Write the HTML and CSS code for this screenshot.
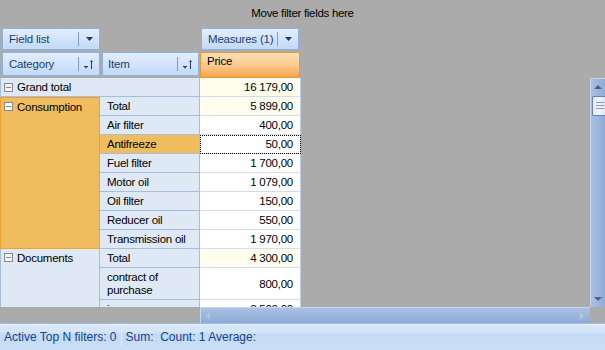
FILE: index.html
```html
<!DOCTYPE html>
<html lang="en">

<head>
    <meta charset="UTF-8">
    <title>Pivot grid</title>
    <link rel="stylesheet" href="styles.css">
</head>

<body>
    <div class="app">
        <!-- filter area -->
        <div class="filter-area">Move filter fields here</div>

        <!-- field list / measures -->
        <div class="field-row">
            <div class="field-btn">
                <span class="field-name">Field list</span>
                <span class="field-tool"><svg width="7" height="4"><path d="M0 0h7L3.5 4z" fill="#1b3c78"/></svg></span>
            </div>
            <div class="field-btn measures">
                <span class="field-name">Measures (1)</span>
                <span class="field-tool"><svg width="7" height="4"><path d="M0 0h7L3.5 4z" fill="#1b3c78"/></svg></span>
            </div>
        </div>

        <!-- row fields and data header -->
        <div class="header-row">
            <div class="field-btn tall">
                <span class="field-name">Category</span>
                <span class="field-tool"><svg class="sort" width="10" height="10"><path d="M0 6h4v1H0z M1 7h2L2 9z M6 2L7.5 0 9 2z M7 2h1v7H7z" fill="#1b3c78"/></svg></span>
            </div>
            <div class="field-btn tall item-btn">
                <span class="field-name">Item</span>
                <span class="field-tool"><svg class="sort" width="10" height="10"><path d="M0 6h4v1H0z M1 7h2L2 9z M6 2L7.5 0 9 2z M7 2h1v7H7z" fill="#1b3c78"/></svg></span>
            </div>
            <div class="data-head">Price</div>
        </div>

        <!-- grid body -->
        <div class="body-row">
            <div class="cells-wrap">
                <div class="cells">
                    <div class="rh grand"><span class="toggle"></span>Grand total</div>
                    <div class="val total">16 179,00</div>

                    <div class="rh cat hot" style="grid-row: span 8"><span class="toggle"></span>Consumption</div>
                    <div class="rh">Total</div><div class="val total">5 899,00</div>
                    <div class="rh">Air filter</div><div class="val">400,00</div>
                    <div class="rh hot-item">Antifreeze</div><div class="val focus">50,00</div>
                    <div class="rh">Fuel filter</div><div class="val">1 700,00</div>
                    <div class="rh">Motor oil</div><div class="val">1 079,00</div>
                    <div class="rh">Oil filter</div><div class="val">150,00</div>
                    <div class="rh">Reducer oil</div><div class="val">550,00</div>
                    <div class="rh">Transmission oil</div><div class="val">1 970,00</div>

                    <div class="rh cat" style="grid-row: span 3"><span class="toggle"></span>Documents</div>
                    <div class="rh">Total</div><div class="val total">4 300,00</div>
                    <div class="rh">contract of<br>purchase</div><div class="val">800,00</div>
                    <div class="rh">insurance</div><div class="val">3 500,00</div>
                </div>
            </div>
            <div class="vscroll">
                <span class="arrow-up"></span>
                <span class="thumb"></span>
                <span class="arrow-down"></span>
            </div>
        </div>

        <div class="hscroll-row">
            <div class="hscroll-gap"></div>
            <div class="hscroll">
                <span class="arrow-left"></span>
                <span class="arrow-right"></span>
            </div>
            <div class="corner"></div>
        </div>

        <!-- status bar -->
        <div class="status">
            <span class="status-item">Active Top N filters: 0</span>
            <span class="status-item">Sum:&nbsp; Count: 1 Average:</span>
        </div>
    </div>
</body>

</html>
```

FILE: styles.css
```css
/* page */
body {
    margin: 0;
    background-color: #ababab;
    font-family: "Liberation Sans", Arial, sans-serif;
    font-size: 11px;
    color: #000;
}

.app {
    width: 605px;
    height: 350px;
    display: flex;
    flex-direction: column;
    overflow: hidden;
}

/* filter area */
.filter-area {
    height: 28px;
    line-height: 14px;
    padding-top: 6px;
    box-sizing: border-box;
    text-align: center;
    font-size: 11.5px;
    letter-spacing: -0.3px;
}

/* field buttons */
.field-row {
    height: 24px;
    display: flex;
    align-items: flex-start;
    padding-left: 2px;
}

.field-btn {
    width: 98px;
    height: 22px;
    box-sizing: border-box;
    border: 1px solid #8db2e3;
    background: linear-gradient(#e3eefd, #d3e4fb 50%, #c3d9f7);
    color: #1b3c78;
    display: flex;
    align-items: center;
    letter-spacing: -0.2px;
    font-size: 11.5px;
}

.field-btn.measures {
    margin-left: 101px;
}

.field-name {
    flex: 1;
    padding-left: 6px;
    white-space: nowrap;
}

.field-tool {
    width: 20px;
    height: 14px;
    border-left: 1px solid #7b9fcf;
    display: flex;
    align-items: center;
    justify-content: center;
}

.field-tool .sort {
    margin-top: 2px;
}

.header-row {
    height: 26px;
    display: flex;
    align-items: flex-start;
    padding-left: 2px;
}

.field-btn.tall {
    height: 24px;
}

.field-btn.item-btn {
    width: 97px;
    margin-left: 2px;
}

.field-btn.item-btn .field-name {
    padding-left: 5px;
}

.data-head {
    width: 100px;
    height: 26px;
    margin-left: 1px;
    box-sizing: border-box;
    border: 1px solid #f0962e;
    background: linear-gradient(#fde0b5, #fbc98a 55%, #f7a24c);
    padding: 2px 0 0 6px;
    font-size: 11.5px;
    letter-spacing: -0.2px;
}

/* grid body */
.body-row {
    height: 229px;
    display: flex;
}

.cells-wrap {
    flex: 1;
    overflow: hidden;
}

.cells {
    width: 301px;
    display: grid;
    grid-template-columns: 100px 100px 101px;
    grid-auto-rows: 19px;
    grid-template-rows: repeat(10, 19px) 32px 19px;
    letter-spacing: -0.25px;
    font-size: 11.5px;
}

.rh {
    background-color: #dfe8f5;
    border-right: 1px solid #a8bdd9;
    border-bottom: 1px solid #a8bdd9;
    display: flex;
    align-items: center;
    padding-left: 7px;
    line-height: 13px;
}

.rh.grand {
    grid-column: span 2;
    border-left: 1px solid #a8bdd9;
    padding-left: 3px;
}

.rh.cat {
    border-left: 1px solid #a8bdd9;
    align-items: flex-start;
    padding: 3px 0 0 3px;
}

.rh.hot {
    background-color: #f0bd5e;
    border: 1px solid #f0a035;
}

.rh.hot-item {
    background-color: #f0bd5e;
    border-left: 1px solid #f0a035;
    margin-left: -1px;
    padding-left: 7px;
}

.toggle {
    width: 7px;
    height: 7px;
    margin: 1px 4px 0 0;
    border: 1px solid #8a8a8a;
    background: #f4f4f4 linear-gradient(#8a8a8a, #8a8a8a) no-repeat center / 5px 1px;
    flex: none;
}

.val {
    background-color: #fff;
    border-right: 1px solid #c2d0e3;
    border-bottom: 1px solid #d2dcea;
    display: flex;
    align-items: center;
    justify-content: flex-end;
    padding-right: 7px;
}

.val.total {
    background-color: #fffdee;
}

.val.focus {
    outline: 1px dotted #000;
    outline-offset: -1px;
}

/* scrollbars */
.vscroll {
    width: 15px;
    box-sizing: border-box;
    border-left: 1px solid #c3d7f2;
    border-top: 1px solid #c3d7f2;
    background: linear-gradient(90deg, #a9c1e3, #8eaad6);
    display: flex;
    flex-direction: column;
    align-items: center;
}

.arrow-up,
.arrow-down {
    width: 0;
    height: 0;
    border-left: 4px solid transparent;
    border-right: 4px solid transparent;
}

.arrow-up {
    margin-top: 6px;
    border-bottom: 4px solid #4d5f82;
}

.arrow-down {
    margin-top: auto;
    margin-bottom: 6px;
    border-top: 4px solid #4d5f82;
}

.thumb {
    width: 14px;
    height: 20px;
    margin-top: 7px;
    margin-left: 1px;
    box-sizing: border-box;
    border: 1px solid #6c83ad;
    border-right: none;
    border-radius: 2px 0 0 2px;
    background:
        repeating-linear-gradient(#8a9ab6 0 1px, transparent 1px 3px) no-repeat 3px 5px / 8px 9px,
        linear-gradient(90deg, #dfe8f6, #f4f7fc 50%, #d6e1f2);
}

.hscroll-row {
    height: 16px;
    display: flex;
}

.hscroll-gap {
    width: 200px;
}

.hscroll {
    width: 390px;
    box-sizing: border-box;
    border-top: 1px solid #c3d7f2;
    border-left: 1px solid #c3d7f2;
    background: linear-gradient(#a9c1e3, #8eaad6);
    display: flex;
    align-items: center;
    justify-content: space-between;
    padding: 0 6px 0 5px;
}

.arrow-left,
.arrow-right {
    width: 0;
    height: 0;
    border-top: 4px solid transparent;
    border-bottom: 4px solid transparent;
}

.arrow-left {
    border-right: 4px solid #b6c5dc;
}

.arrow-right {
    border-left: 4px solid #b6c5dc;
}

.corner {
    flex: 1;
}

/* status bar */
.status {
    flex: 1;
    box-sizing: border-box;
    border-top: 1px solid #9dbde8;
    box-shadow: inset 0 1px 0 #e6f0fd;
    background: linear-gradient(#d9e8fb, #d5e5fa 30%, #c4daf6 40%, #cadef7);
    display: flex;
    align-items: center;
    color: #15428b;
    font-size: 12px;
}

.status-item {
    padding: 0 4px;
}

.status-item + .status-item {
    border-left: 1px solid #eaf2fc;
    line-height: 17px;
}
```
